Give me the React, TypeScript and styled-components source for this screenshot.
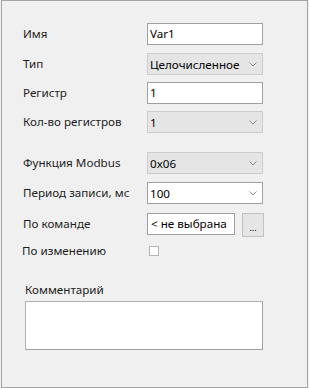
import React from 'react'
import styled, { createGlobalStyle } from 'styled-components'

const GlobalStyle = createGlobalStyle`
  html, body {
    margin: 0;
    padding: 0;
    background: #f0f0f0;
  }
  body {
    font-family: 'Noto Sans', 'Open Sans', sans-serif;
    font-size: 11.65px;
    color: #1e1e1e;
  }
`

const Frame = styled.div`
  box-sizing: border-box;
  width: 307px;
  height: 388px;
  margin-left: 1px;
  border: 1px solid #a3a3a3;
  background: #f0f0f0;
  padding: 22px 0 0 21px;
`

const Row = styled.div<{ $gap?: number }>`
  display: grid;
  grid-template-columns: 124px auto;
  align-items: center;
  height: 22px;
  margin-top: ${(p) => p.$gap ?? 0}px;
`

const Label = styled.span`
  white-space: nowrap;
  line-height: 16px;
`

const TextBox = styled.div`
  box-sizing: border-box;
  width: 116px;
  height: 22px;
  border: 1px solid #a0a0a0;
  background: #fff;
  padding: 0 2px;
  line-height: 20px;
  color: #000;
`

const Combo = styled.div<{ $editable?: boolean }>`
  box-sizing: border-box;
  width: 116px;
  height: 22px;
  display: flex;
  align-items: center;
  justify-content: space-between;
  border: 1px solid ${(p) => (p.$editable ? '#a0a0a0' : '#cccccc')};
  background: ${(p) => (p.$editable ? '#ffffff' : '#e5e5e5')};
  padding: 0 5px 0 2px;
  color: #000;
  white-space: nowrap;
`

const PickRow = styled.div`
  display: flex;
  align-items: flex-start;
  gap: 7px;
  height: 22px;
`

const PickBox = styled.div`
  box-sizing: border-box;
  width: 88px;
  height: 22px;
  border: 1px solid #a0a0a0;
  background: #fff;
  padding: 0 3px;
  line-height: 20px;
  color: #000;
  white-space: nowrap;
  overflow: hidden;
`

const DotsButton = styled.div`
  box-sizing: border-box;
  width: 22px;
  height: 24px;
  border: 1px solid #c2c2c2;
  background: #e5e5e5;
  display: flex;
  align-items: flex-end;
  justify-content: center;
  padding-bottom: 4px;
  font-size: 9px;
  line-height: 9px;
  color: #000;
`

const CheckRow = styled.div`
  display: grid;
  grid-template-columns: 127px auto;
  align-items: center;
  height: 16px;
  margin-top: 8px;
  margin-left: -1px;
`

const CheckBox = styled.span`
  box-sizing: border-box;
  display: block;
  width: 10px;
  height: 10px;
  border: 1px solid #b5b5b5;
  background: #fff;
`

const CommentBlock = styled.div`
  margin: 23px 0 0 2px;
  display: flex;
  flex-direction: column;
  gap: 3px;
`

const CommentArea = styled.div`
  box-sizing: border-box;
  width: 238px;
  height: 49px;
  border: 1px solid #b0b0b0;
  border-right-color: #a0a0a0;
  border-bottom-color: #a0a0a0;
  background: #fff;
`

const Chevron = () => (
  <svg width="8" height="5" viewBox="0 0 8 5">
    <polyline points="0.5,0.5 4,4 7.5,0.5" fill="none" stroke="#8a8a8a" strokeWidth="1" />
  </svg>
)

export default function App() {
  return (
    <>
      <GlobalStyle />
      <Frame>
        <Row>
          <Label>Имя</Label>
          <TextBox>Var1</TextBox>
        </Row>
        <Row $gap={8}>
          <Label>Тип</Label>
          <Combo>
            <span>Целочисленное</span>
            <Chevron />
          </Combo>
        </Row>
        <Row $gap={7}>
          <Label>Регистр</Label>
          <TextBox>1</TextBox>
        </Row>
        <Row $gap={7}>
          <Label>Кол-во регистров</Label>
          <Combo>
            <span>1</span>
            <Chevron />
          </Combo>
        </Row>

        <Row $gap={19}>
          <Label>Функция Modbus</Label>
          <Combo>
            <span>0x06</span>
            <Chevron />
          </Combo>
        </Row>
        <Row $gap={8}>
          <Label>Период записи, мс</Label>
          <Combo $editable>
            <span>100</span>
            <Chevron />
          </Combo>
        </Row>
        <Row $gap={9}>
          <Label>По команде</Label>
          <PickRow>
            <PickBox>&lt; не выбрана</PickBox>
            <DotsButton>...</DotsButton>
          </PickRow>
        </Row>
        <CheckRow>
          <Label>По изменению</Label>
          <CheckBox />
        </CheckRow>

        <CommentBlock>
          <Label>Комментарий</Label>
          <CommentArea />
        </CommentBlock>
      </Frame>
    </>
  )
}
